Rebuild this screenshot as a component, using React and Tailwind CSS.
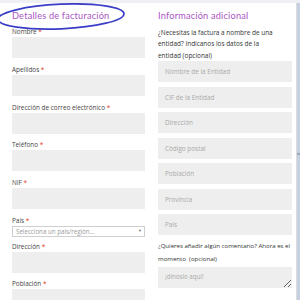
import React from "react"

const leftFields = [
  { label: "Nombre" },
  { label: "Apellidos" },
  { label: "Dirección de correo electrónico" },
  { label: "Teléfono" },
  { label: "NIF" },
]

const rightFields = [
  "Nombre de la Entidad",
  "CIF de la Entidad",
  "Dirección",
  "Código postal",
  "Población",
  "Provincia",
  "País",
]

function Label({ children }) {
  return (
    <div className="h-[10px] text-[6.4px] leading-[10px] font-medium text-[#3f3f3f]">
      {children} <span className="text-[#e2401c]">*</span>
    </div>
  )
}

function Box({ placeholder }) {
  return (
    <div className="flex h-[21px] items-center bg-[#eeeeee] pl-[7px] text-[6.4px] text-[#a9a9a9]">
      {placeholder}
    </div>
  )
}

function Heading({ children }) {
  return (
    <h2
      className="mt-[5px] mb-[3px] h-[16px] text-[9.2px] leading-[16px] tracking-[0.2px] text-[#a955bf]"
      style={{ fontFamily: "Lato, sans-serif" }}
    >
      {children}
    </h2>
  )
}

export default function App() {
  return (
    <div
      className="flex h-[300px] w-[300px] flex-col overflow-hidden bg-[#eef0f4]"
      style={{ fontFamily: "'Open Sans', 'Liberation Sans', sans-serif" }}
    >
      <div className="h-[3px] shrink-0" />
      <div className="flex flex-1">
        {/* panel */}
        <div className="relative flex flex-1 gap-[13px] border-r border-[#dcdcdc] bg-white pl-[12px] pr-[4px]">
          {/* Detalles de facturación */}
          <div className="flex w-[133px] flex-col">
            <Heading>Detalles de facturación</Heading>
            {leftFields.map((f) => (
              <div key={f.label} className="mb-[6.75px]">
                <Label>{f.label}</Label>
                <Box />
              </div>
            ))}
            <div className="mb-[5px]">
              <Label>País</Label>
              <div className="flex h-[11px] items-center justify-between border border-[#cfcfcf] bg-white pl-[3px] pr-[2px] text-[6.2px] text-[#9a9a9a]">
                <span>Selecciona un país/región…</span>
                <span className="text-[4px] text-[#777]">▼</span>
              </div>
            </div>
            <div className="mb-[6px]">
              <Label>Dirección</Label>
              <Box />
            </div>
            <div>
              <Label>Población</Label>
              <Box />
            </div>
          </div>

          {/* Información adicional */}
          <div className="flex w-[134px] flex-col">
            <Heading>Información adicional</Heading>
            <p className="mb-[0.5px] text-[6.45px] leading-[11.3px] text-[#333]">
              <span className="block">¿Necesitas la factura a nombre de una</span>
              <span className="block">entidad? Indícanos los datos de la</span>
              <span className="block">entidad (opcional)</span>
            </p>
            <div className="flex flex-col gap-[4.5px]">
              {rightFields.map((p) => (
                <Box key={p} placeholder={p} />
              ))}
            </div>
            <p className="mt-[5px] mb-[1.5px] text-[6.1px] leading-[12.5px] text-[#333]">
              <span className="block whitespace-nowrap">¿Quieres añadir algún comentario? Ahora es el</span>
              <span className="block">momento &nbsp;(opcional)</span>
            </p>
            <textarea
              className="h-[21px] w-full bg-[#eeeeee] px-[7px] pt-[6px] text-[6.2px] leading-[8px] text-[#a9a9a9] outline-none placeholder:text-[#a9a9a9]"
              placeholder="¡dínoslo aquí!"
            />
          </div>

          {/* hand-drawn annotation over the heading */}
          <svg className="pointer-events-none absolute left-0 top-0" width="132" height="34" viewBox="0 0 132 34">
            <ellipse cx="61" cy="13.5" rx="63" ry="12.3" fill="none" stroke="#3a3ec6" strokeWidth="1.8" transform="rotate(-2.5 61 13.5)" />
          </svg>
        </div>

        {/* side strip */}
        <div className="flex w-[3px] flex-col bg-[#c6d0e1]">
          <div className="h-[150px]" />
          <div className="h-[2px] bg-[#9fa9b8]" />
        </div>
      </div>
    </div>
  )
}
